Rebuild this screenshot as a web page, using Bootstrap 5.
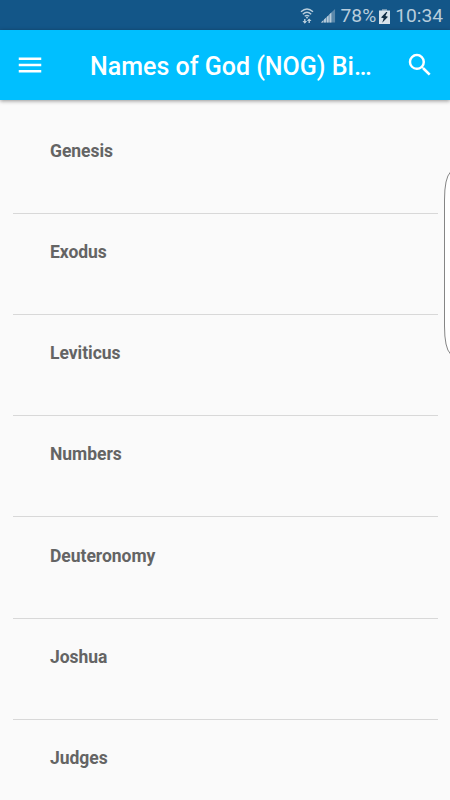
<!DOCTYPE html>
<html lang="en">
<head>
<meta charset="utf-8">
<meta name="viewport" content="width=device-width, initial-scale=1">
<title>Names of God (NOG) Bible</title>
<link href="https://cdn.jsdelivr.net/npm/bootstrap@5.3.0/dist/css/bootstrap.min.css" rel="stylesheet">
<style>
body { font-family: Roboto, sans-serif; background: #fafafa; height: 800px; }
.status { height: 30px; background: #135688; color: #b8cddc; font-size: 19.2px; line-height: 30px; padding: 2px 7px 0 0; }
.appbar { height: 70px; background: #00bfff; box-shadow: 0 1px 4px rgba(0,0,0,.42); z-index: 1; padding: 0 15px; }
.title { font-size: 25px; font-weight: 500; line-height: 30px; padding-top: 3px; margin-left: 45px; }
.books { padding: 12.4px 12.5px 0; }
.book { height: 101.25px; padding: 26.2px 37.5px 0; font-size: 17.5px; line-height: 24px; font-weight: 700; letter-spacing: -.03px; color: #646464; border-bottom: 1px solid #d8d8d8; }
.signal { margin-left: 6px; margin-right: 5px; }
.cell { margin-left: 3px; margin-right: 5px; }
.edge { right: 0; top: 168px; }
</style>
</head>
<body class="d-flex flex-column overflow-hidden position-relative">
<div class="status d-flex align-items-center justify-content-end flex-shrink-0">
  <svg width="14" height="18" viewBox="0 0 14 18" fill="none" stroke="#b8cddc" stroke-width="1.4"><path d="M1 4.8Q7-.8 13 4.8M2.8 7.2Q7 3.4 11.2 7.2M4.7 9.3Q7 7.4 9.3 9.3"/><circle cx="7" cy="10.6" r="1" fill="#b8cddc" stroke="none"/><path d="M4.8 16v-4M9.2 12v4"/><path fill="#b8cddc" stroke="none" d="M2.5 14h4.6L4.8 16.8zM6.9 14h4.6L9.2 11.4z"/></svg>
  <svg class="signal" width="16" height="16" viewBox="0 0 17 16"><path fill="#5b88aa" d="M16 .5V15H1z"/><path fill="#b8cddc" d="M1 15l2.5-2.4V15zM4.3 11.8l2-1.9V15h-2zM7.2 9l2-1.9V15h-2zM10.1 6.2l2-1.9V15h-2z"/></svg>
  <span class="percent">78%</span>
  <svg class="cell" width="11" height="15" viewBox="0 0 11 15"><path fill="#7096b3" d="M3 0h5v2H3z"/><path fill="#d8e3eb" d="M0 1.5h11V15H0z"/><path fill="#102c43" d="M7.2 3L2 8.6l2.7.7L3.2 13.7 9 7.7l-2.6-.8L8.4 3z"/></svg>
  <span class="clock">10:34</span>
</div>
<nav class="appbar d-flex align-items-center flex-shrink-0 position-relative text-white">
  <svg width="30" height="30" viewBox="0 0 24 24" fill="#fff"><path d="M3 18h18v-2H3v2zm0-5h18v-2H3v2zm0-7v2h18V6H3z"/></svg>
  <div class="title text-nowrap">Names of God (NOG) Bi…</div>
  <svg class="ms-auto" width="30" height="30" viewBox="0 0 24 24" fill="#fff"><path d="M15.5 14h-.79l-.28-.27A6.471 6.471 0 0 0 16 9.5 6.5 6.5 0 1 0 9.5 16c1.61 0 3.09-.59 4.23-1.57l.27.28v.79l5 4.99L20.49 19l-4.99-5zm-6 0C7.01 14 5 11.99 5 9.5S7.01 5 9.5 5 14 7.01 14 9.5 11.99 14 9.5 14z"/></svg>
</nav>
<main class="books">
  <div class="book">Genesis</div>
  <div class="book">Exodus</div>
  <div class="book">Leviticus</div>
  <div class="book">Numbers</div>
  <div class="book">Deuteronomy</div>
  <div class="book">Joshua</div>
  <div class="book">Judges</div>
</main>
<svg class="edge position-absolute" width="7" height="190" viewBox="0 0 7 190"><path d="M7.5 4Q1.5 10 1.5 32V158Q1.5 180 7.5 186" fill="#fff" stroke="#858585" stroke-width="1"/></svg>
</body>
</html>
